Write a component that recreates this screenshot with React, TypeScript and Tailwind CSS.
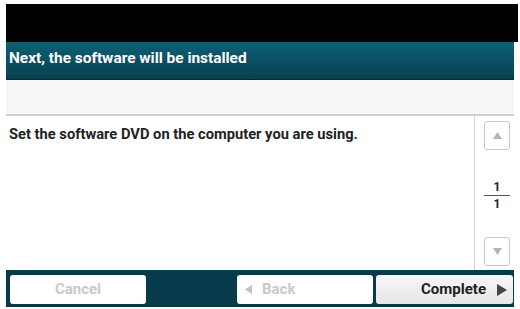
export default function App() {
    return (
        <div className="w-[520px] h-[309px] bg-white pl-[6px] pt-[4px] overflow-hidden font-['Roboto',sans-serif]">
            <div className="w-[508px] h-[305px] flex flex-col">
                {/* status bar */}
                <div className="h-[38px] bg-black w-[512px]" />

                {/* title */}
                <div className="h-[38px] flex items-center px-[3px] bg-gradient-to-b from-[#0e6076] to-[#08404f] border-b border-[#062a35]">
                    <span className="text-white font-bold text-[15.4px] -mt-[3px]">
                        Next, the software will be installed
                    </span>
                </div>

                <div className="h-[36px] bg-[#f6f6f6] border-b-2 border-[#d0d0d0]" />

                {/* body */}
                <div className="h-[154px] flex bg-white">
                    <div className="flex-1 pl-[3px] pt-[7px]">
                        <p className="text-[14.7px] font-bold text-[#222]">
                            Set the software DVD on the computer you are using.
                        </p>
                    </div>
                    <div className="w-[40px] border-l border-[#d6d6d6] flex flex-col items-center pl-[5px] pt-[5px] pb-[4px]">
                        <div className="w-[26px] h-[29px] border border-[#c8c8c8] rounded-[3px] flex items-center justify-center">
                            <svg width="9" height="7" viewBox="0 0 9 7">
                                <path d="M4.5 0 L9 7 L0 7 Z" fill="#b5b5b5" />
                            </svg>
                        </div>
                        <div className="flex-1 flex flex-col items-center justify-center text-[12px] font-bold text-[#222] leading-[12px] pt-[4px]">
                            <span>1</span>
                            <div className="w-[26px] h-px bg-[#555] my-[2px]" />
                            <span>1</span>
                        </div>
                        <div className="w-[26px] h-[29px] border border-[#c8c8c8] rounded-[3px] flex items-center justify-center">
                            <svg width="9" height="7" viewBox="0 0 9 7">
                                <path d="M0 0 L9 0 L4.5 7 Z" fill="#b5b5b5" />
                            </svg>
                        </div>
                    </div>
                </div>

                {/* footer */}
                <div className="h-[37px] bg-[#073a4b] flex items-start pt-[5px] pl-[4px] pr-[1px]">
                    <div className="w-[136px] h-[29px] bg-white rounded-[3px] flex items-center justify-center text-[15px] font-bold text-[#c9c9c9]">
                        Cancel
                    </div>
                    <div className="flex-1" />
                    <div className="w-[136px] h-[29px] bg-white rounded-[3px] flex items-center pl-[8px] gap-[10px] text-[15px] font-bold text-[#c9c9c9]">
                        <svg width="7" height="9" viewBox="0 0 7 9">
                            <path d="M0 4.5 L7 0 L7 9 Z" fill="#c0c0c0" />
                        </svg>
                        <span>Back</span>
                    </div>
                    <div className="w-[137px] h-[29px] ml-[3px] rounded-[3px] bg-gradient-to-b from-[#f7f7f7] to-[#e6e6e6] flex items-center justify-end gap-[11px] pr-[6px] text-[15px] font-bold text-[#222]">
                        <span>Complete</span>
                        <svg width="10" height="12" viewBox="0 0 10 12">
                            <path d="M0 0 L10 6 L0 12 Z" fill="#444" />
                        </svg>
                    </div>
                </div>
            </div>
        </div>
    );
}
